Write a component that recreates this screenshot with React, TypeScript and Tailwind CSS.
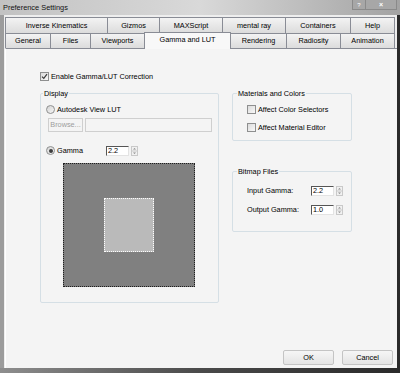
import React from "react";

const Check = ({ checked }: { checked?: boolean }) => (
  <div className="w-[9px] h-[9px] border border-[#8e8f8f] bg-gradient-to-br from-[#dcdcdc] to-[#f8f8f8] flex items-center justify-center shrink-0">
    {checked && (
      <svg width="7" height="7" viewBox="0 0 7 7">
        <path d="M1 3.6 L2.8 5.4 L6 1.2" fill="none" stroke="#3a3a3a" strokeWidth="1.2" />
      </svg>
    )}
  </div>
);

const Radio = ({ checked }: { checked?: boolean }) => (
  <div className="w-[9px] h-[9px] rounded-full border border-[#8e8f8f] bg-gradient-to-br from-[#d4d4d4] to-[#f6f6f6] flex items-center justify-center shrink-0">
    {checked && <div className="w-[4px] h-[4px] rounded-full bg-[#3d3d3d]" />}
  </div>
);

const Spin = () => (
  <svg width="7" height="10" viewBox="0 0 7 10" className="shrink-0">
    <rect x="0.5" y="0.5" width="6" height="9" fill="#f1f1f1" stroke="#c9c9c9" />
    <line x1="0.5" y1="5" x2="6.5" y2="5" stroke="#c9c9c9" />
    <path d="M2 3.6 L3.5 2 L5 3.6 Z" fill="#8a8a8a" />
    <path d="M2 6.4 L3.5 8 L5 6.4 Z" fill="#8a8a8a" />
  </svg>
);

const Field = ({ value, w }: { value: string; w: string }) => (
  <div className={`${w} h-[10px] bg-white border-l border-t border-[#555] border-r border-b border-r-[#e3e3e3] border-b-[#e3e3e3] flex items-center pl-[1px] leading-none`}>
    {value}
  </div>
);

const Tab = ({ label, w }: { label: string; w: string }) => (
  <div className={`${w} h-full border-l border-t border-[#898c95] bg-gradient-to-b from-[#f3f3f3] to-[#dcdcdc] flex items-center justify-center leading-none`}>
    {label}
  </div>
);

export default function App() {
  return (
    <div className="w-[400px] h-[373px] overflow-hidden bg-gradient-to-r from-[#8e8e8e] via-[#4a4a4a] to-[#2a2a2a] flex flex-col font-['Liberation_Sans',Arial,sans-serif] text-[7.3px] text-black">
      {/* title bar */}
      <div className="h-[15px] shrink-0 flex items-start bg-gradient-to-r from-[#c2c2c2] via-[#d9d9d9] to-[#a3a3a3]">
        <span className="ml-[3px] mt-[3px] text-[7.4px] leading-[9px] text-[#111]">Preference Settings</span>
        <div className="ml-auto mr-[3px] flex">
          <div className="w-[13px] h-[10px] bg-[#a7a7a7] border-b border-l border-[#8a8a8a] flex items-center justify-center text-white text-[6px] leading-none">?</div>
          <div className="w-[32px] h-[10px] bg-[#a7a7a7] border-b border-l border-r border-[#8a8a8a] flex items-center justify-center text-white text-[7px] font-bold leading-none">×</div>
        </div>
      </div>

      {/* client */}
      <div className="flex-1 mr-[3px] mb-[5px] border-l-[4px] border-l-[#9c9c9c] bg-[#eeeeee] flex flex-col pt-[2px] pl-[1px]">
        {/* tabs row 1 */}
        <div className="h-[16px] flex mr-[2px]">
          <Tab label="Inverse Kinematics" w="w-[102px]" />
          <Tab label="Gizmos" w="w-[52px]" />
          <Tab label="MAXScript" w="w-[63px]" />
          <Tab label="mental ray" w="w-[63px]" />
          <Tab label="Containers" w="w-[65px]" />
          <div className="w-[45px] h-full border-l border-t border-r border-[#898c95] bg-gradient-to-b from-[#f3f3f3] to-[#dcdcdc] flex items-center justify-center leading-none">Help</div>
        </div>
        {/* tabs row 2 */}
        <div className="h-[15px] flex mr-[2px]">
          <Tab label="General" w="w-[45px]" />
          <Tab label="Files" w="w-[40px]" />
          <Tab label="Viewports" w="w-[54px]" />
          <div className="relative z-10 w-[87px] h-[17px] -mt-[1px] border-l border-t border-r border-[#898c95] bg-[#f8f8f8] flex items-start justify-center pt-[3px] leading-none">
            Gamma and LUT
          </div>
          <div className="w-[55px] h-full border-t border-[#898c95] bg-gradient-to-b from-[#f3f3f3] to-[#dcdcdc] flex items-center justify-center leading-none">Rendering</div>
          <Tab label="Radiosity" w="w-[54px]" />
          <div className="w-[55px] h-full border-l border-t border-r border-[#898c95] bg-gradient-to-b from-[#f3f3f3] to-[#dcdcdc] flex items-center justify-center leading-none">Animation</div>
        </div>

        {/* panel */}
        <div className="flex-1 border-t border-[#898c95] border-l border-l-white bg-[#f4f4f4] flex flex-col pl-[34px] pt-[23px] pb-[3px] pr-[4px]">
          <div className="flex items-center h-[9px] gap-[2px]">
            <Check checked />
            <span className="leading-none">Enable Gamma/LUT Correction</span>
          </div>

          <div className="flex items-start mt-[8px] gap-[13px]">
            {/* Display group */}
            <fieldset className="w-[179px] border border-[#d5dfe5] rounded-[2px] px-0 pb-[15px]">
              <legend className="ml-[2px] px-[1px] leading-[9px]">Display</legend>
              <div className="flex flex-col pl-[5px]">
                <div className="mt-[7px] h-[9px] flex items-center gap-[2px]">
                  <Radio />
                  <span className="leading-none">Autodesk View LUT</span>
                </div>
                <div className="mt-[4px] h-[14px] flex ml-[2px] gap-[2px]">
                  <div className="w-[35px] h-full border border-[#cfcfcf] bg-[#f4f4f4] text-[#9d9d9d] flex items-center justify-center leading-none">Browse...</div>
                  <div className="w-[127px] h-full border border-[#cfcfcf] bg-[#f4f4f4]" />
                </div>
                <div className="mt-[13px] h-[11px] flex items-center">
                  <Radio checked />
                  <span className="ml-[2px] leading-none w-[49px]">Gamma</span>
                  <Field value="2.2" w="w-[23px]" />
                  <div className="ml-[2px]"><Spin /></div>
                </div>
                <div className="mt-[7px] ml-[17px] w-[132px] h-[124px] bg-[#808080] border border-dotted border-[#1e1e1e] flex items-center justify-center">
                  <div className="w-[50px] h-[54px] bg-[#bababa] border border-dotted border-white" />
                </div>
              </div>
            </fieldset>

            {/* right column */}
            <div className="w-[120px] flex flex-col">
              <fieldset className="border border-[#d5dfe5] rounded-[2px] px-0 pb-[8px]">
                <legend className="ml-[4px] px-[1px] leading-[9px]">Materials and Colors</legend>
                <div className="flex flex-col pl-[14px]">
                  <div className="mt-[7px] h-[9px] flex items-center gap-[2px]">
                    <Check />
                    <span className="leading-none">Affect Color Selectors</span>
                  </div>
                  <div className="mt-[9px] h-[9px] flex items-center gap-[2px]">
                    <Check />
                    <span className="leading-none">Affect Material Editor</span>
                  </div>
                </div>
              </fieldset>
              <fieldset className="mt-[26px] border border-[#d5dfe5] rounded-[2px] px-0 pb-[16px]">
                <legend className="ml-[4px] px-[1px] leading-[9px]">Bitmap Files</legend>
                <div className="flex flex-col pl-[14px]">
                  <div className="mt-[10px] h-[10px] flex items-center">
                    <span className="w-[64px] leading-none">Input Gamma:</span>
                    <Field value="2.2" w="w-[23px]" />
                    <div className="ml-[2px]"><Spin /></div>
                  </div>
                  <div className="mt-[9px] h-[10px] flex items-center">
                    <span className="w-[64px] leading-none">Output Gamma:</span>
                    <Field value="1.0" w="w-[23px]" />
                    <div className="ml-[2px]"><Spin /></div>
                  </div>
                </div>
              </fieldset>
            </div>
          </div>

          <div className="mt-auto flex justify-end gap-[8px]">
            <div className="w-[51px] h-[15px] border border-[#c4c4c4] rounded-[2px] bg-gradient-to-b from-[#f6f6f6] to-[#e4e4e4] flex items-center justify-center leading-none">OK</div>
            <div className="w-[51px] h-[15px] border border-[#c4c4c4] rounded-[2px] bg-gradient-to-b from-[#f6f6f6] to-[#e4e4e4] flex items-center justify-center leading-none">Cancel</div>
          </div>
        </div>
      </div>
    </div>
  );
}
